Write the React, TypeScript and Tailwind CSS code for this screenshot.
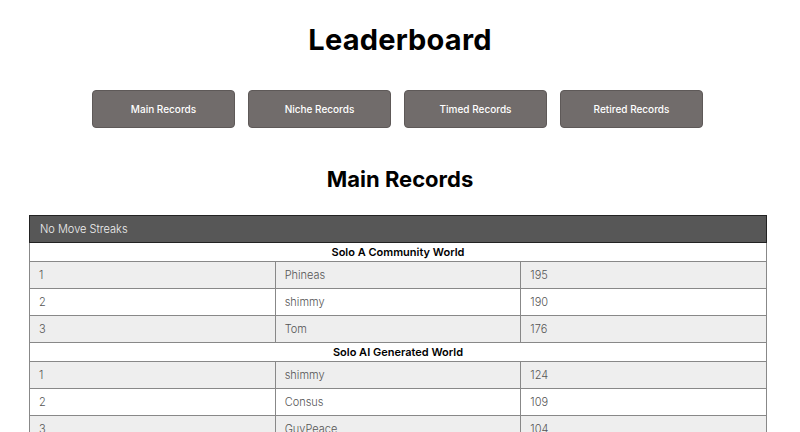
const tabs = ['Main Records', 'Niche Records', 'Timed Records', 'Retired Records'];

const sections = [
  {
    title: 'Solo A Community World',
    rows: [
      ['1', 'Phineas', '195'],
      ['2', 'shimmy', '190'],
      ['3', 'Tom', '176'],
    ],
  },
  {
    title: 'Solo AI Generated World',
    rows: [
      ['1', 'shimmy', '124'],
      ['2', 'Consus', '109'],
      ['3', 'GuyPeace', '104'],
    ],
  },
];

const App = () => {
  return (
    <div className="min-h-screen bg-white font-['Inter',sans-serif] text-black overflow-hidden">
      <h1 className="pt-[22px] text-center text-[29px] font-bold leading-[36px] tracking-[0.2px]">Leaderboard</h1>

      <div className="mt-[32px] flex justify-center gap-[13px] pr-[5px]">
        {tabs.map(tab => (
          <button
            key={tab}
            className="w-[143px] h-[38px] rounded-[4px] border border-[#5e5958] bg-[#716c6b] text-[10px] font-medium text-white"
          >
            {tab}
          </button>
        ))}
      </div>

      <h2 className="mt-[36px] text-center text-[22px] font-bold leading-[30px]">Main Records</h2>

      <div className="mx-[29px] mt-[21px] w-[738px]">
        <table className="w-full table-fixed border-collapse border border-[#cfcfcf] text-[11px]">
          <thead>
            <tr>
              <th colSpan={3} className="h-[27px] border border-[#222] bg-[#575757] px-[10px] text-left font-light text-[#f0f0f0]">
                No Move Streaks
              </th>
            </tr>
          </thead>
          <tbody>
            {sections.map(section => (
              <>
                <tr key={section.title} className="bg-white">
                  <td colSpan={3} className="h-[19px] border border-[#888] text-center font-semibold text-black">
                    {section.title}
                  </td>
                </tr>
                {section.rows.map((row, i) => (
                  <tr key={section.title + row[0]} className={i % 2 === 0 ? 'bg-[#eeeeee]' : 'bg-white'}>
                    {row.map((cell, j) => (
                      <td key={j} className="h-[27px] border border-[#888] px-[9px] font-light text-[#555]">
                        {cell}
                      </td>
                    ))}
                  </tr>
                ))}
              </>
            ))}
          </tbody>
        </table>
      </div>
    </div>
  );
};

export default App;
